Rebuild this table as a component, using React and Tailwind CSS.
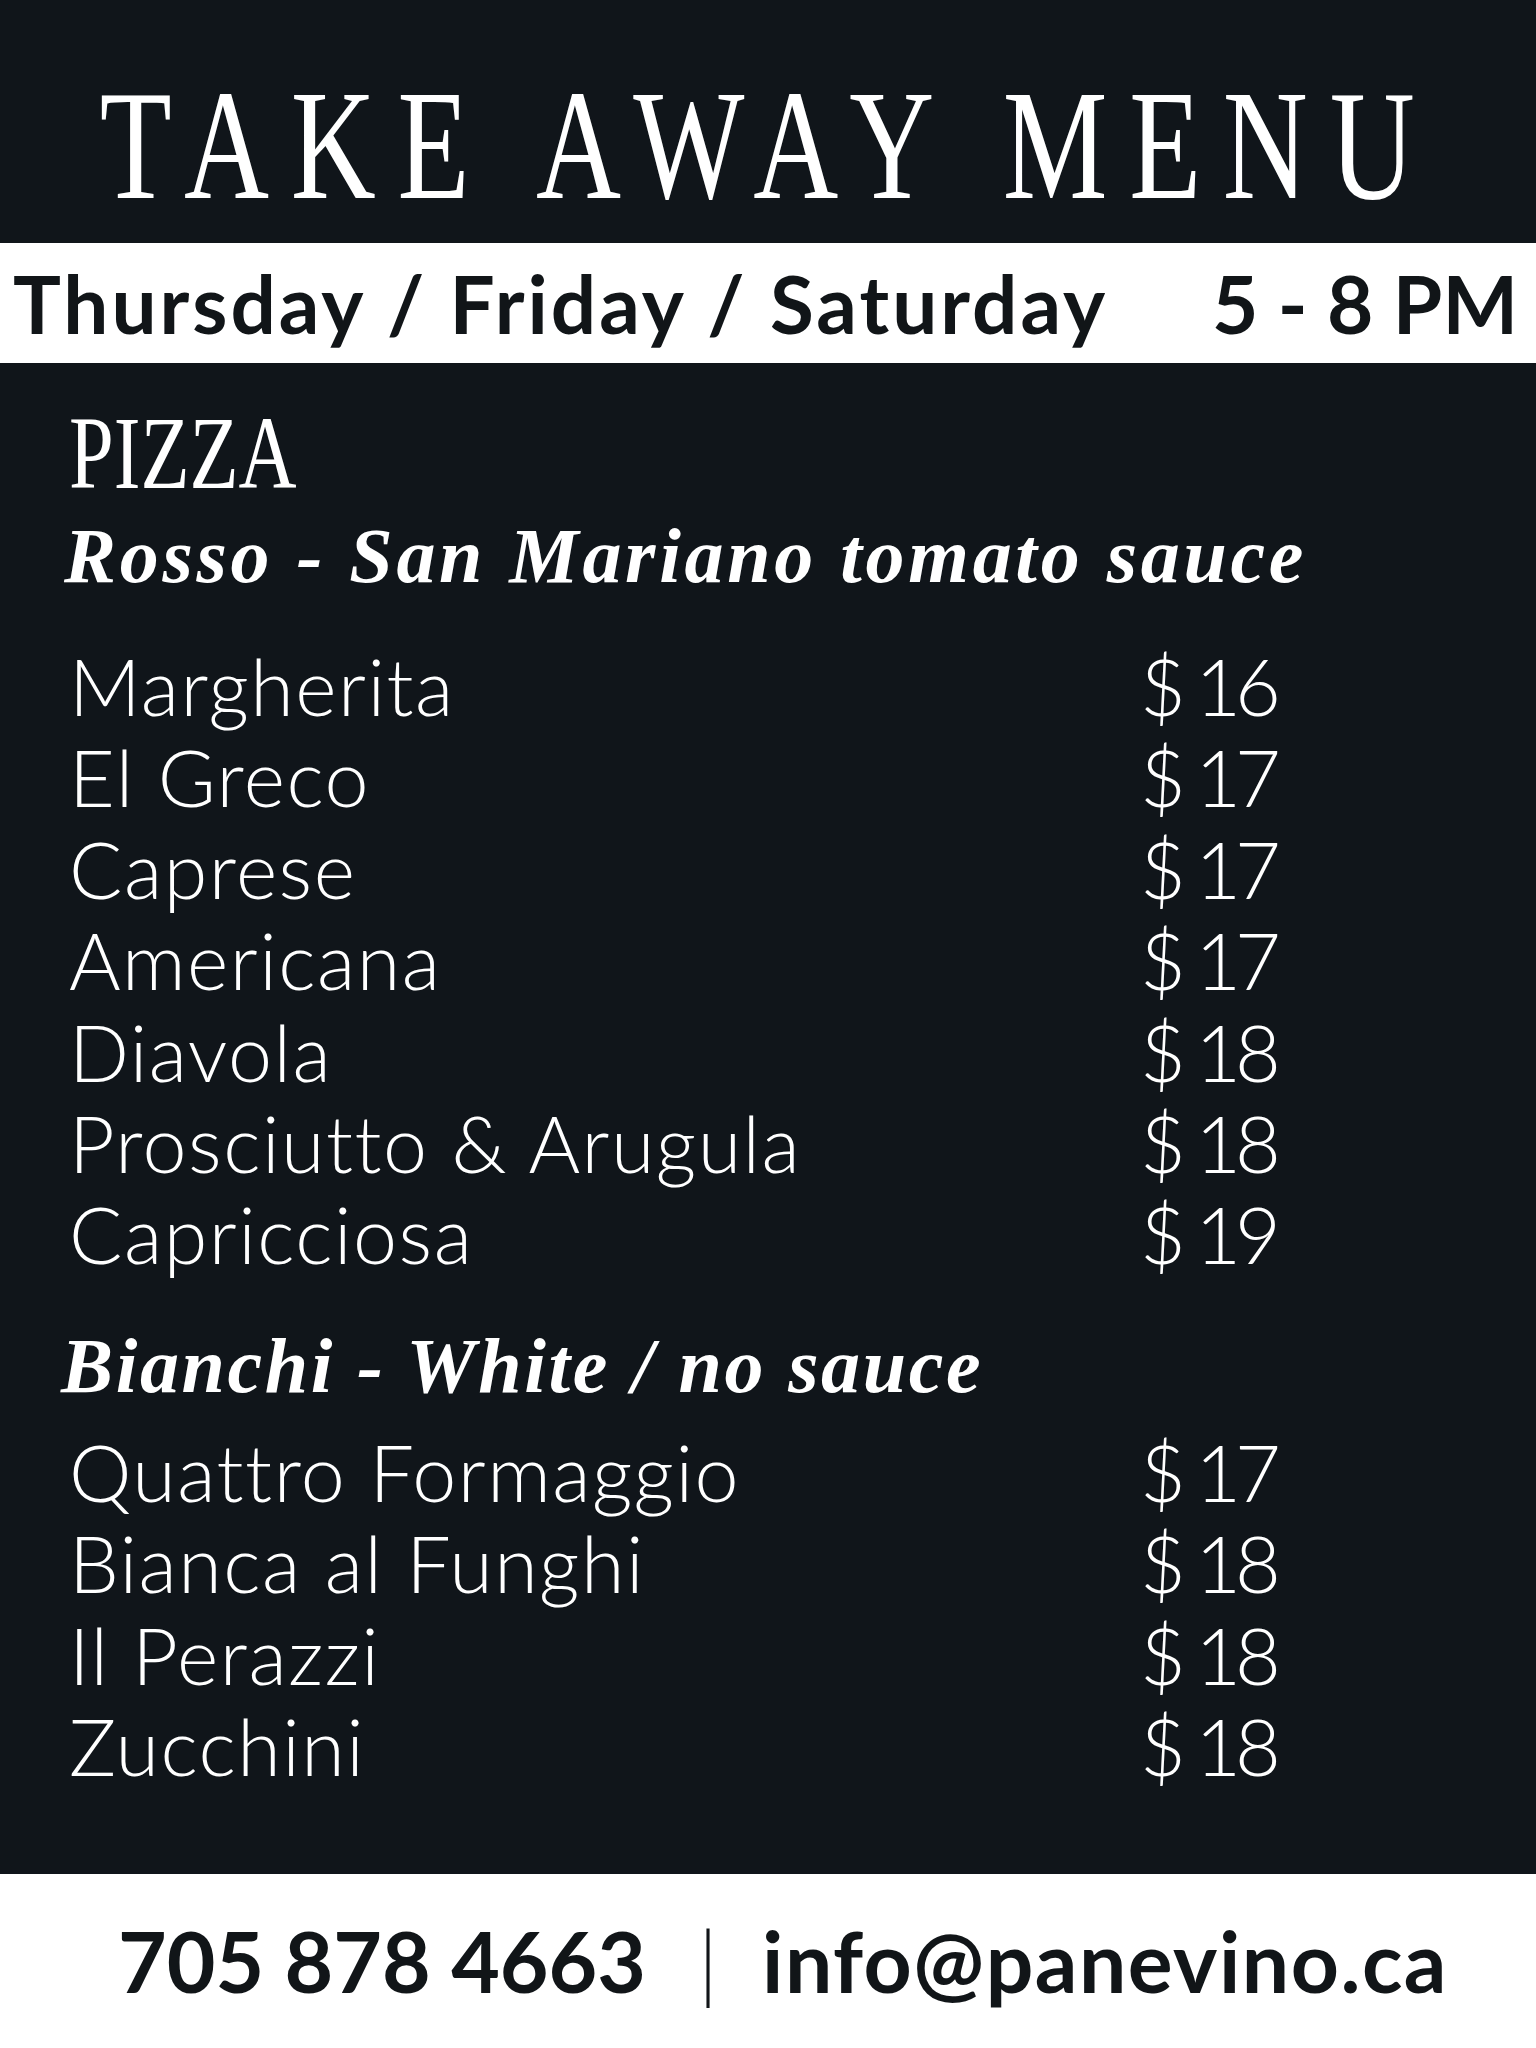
const rosso = [
  ["Margherita", "$ 16"],
  ["El Greco", "$ 17"],
  ["Caprese", "$ 17"],
  ["Americana", "$ 17"],
  ["Diavola", "$ 18"],
  ["Prosciutto & Arugula", "$ 18"],
  ["Capricciosa", "$ 19"],
];

const bianchi = [
  ["Quattro Formaggio", "$ 17"],
  ["Bianca al Funghi", "$ 18"],
  ["Il Perazzi", "$ 18"],
  ["Zucchini", "$ 18"],
];

function ItemList({ items }) {
  return (
    <div className="grid grid-cols-[1071px_1fr] font-['Lato',sans-serif] font-light text-[79px] leading-[91.4px] text-white">
      {items.map(([name, price]) => (
        <div key={name} className="contents">
          <span className="tracking-[1.5px]">{name}</span>
          <span className="tracking-[-6px]">{price}</span>
        </div>
      ))}
    </div>
  );
}

export default function App() {
  return (
    <div className="w-[1536px] h-[2048px] bg-[#10151a] flex flex-col">
      {/* header */}
      <div className="h-[243px] flex items-start justify-center pt-[67px]">
        <h1 className="font-['Liberation_Serif',serif] font-normal text-[157px] leading-[157px] text-white tracking-[29px] scale-x-[0.75] whitespace-nowrap">
          TAKE AWAY MENU
        </h1>
      </div>

      {/* days band */}
      <div className="h-[120px] bg-white flex items-center justify-between pl-[13px] pr-[18px] font-['Lato',sans-serif] font-bold text-[80px] leading-none text-[#111518]">
        <span className="tracking-[3px]">Thursday / Friday / Saturday</span>
        <span>5 - 8 PM</span>
      </div>

      {/* menu */}
      <div className="flex-1 px-[69px] pt-[39px]">
        <div className="font-['Liberation_Serif',serif] text-[103px] leading-[103px] text-white scale-x-[0.78] origin-left">
          PIZZA
        </div>
        <h2 className="mt-[6px] -ml-[5px] font-['Liberation_Serif',serif] font-bold italic text-[78px] leading-[90px] tracking-[3.7px] text-white">
          Rosso - San Mariano tomato sauce
        </h2>
        <div className="mt-[39px]">
          <ItemList items={rosso} />
        </div>
        <h2 className="mt-[41px] -ml-[8px] font-['Liberation_Serif',serif] font-bold italic text-[78px] leading-[90px] tracking-[2.6px] text-white">
          Bianchi - White / no sauce
        </h2>
        <div className="mt-[15px]">
          <ItemList items={bianchi} />
        </div>
      </div>

      {/* footer */}
      <div className="h-[174px] bg-white flex items-center pl-[118px] font-['Lato',sans-serif] font-bold text-[84px] leading-none text-[#111518]">
        <span>705 878 4663</span>
        <span className="ml-[52px] mr-[44px] font-light">|</span>
        <span className="tracking-[1.5px]">info@panevino.ca</span>
      </div>
    </div>
  );
}
